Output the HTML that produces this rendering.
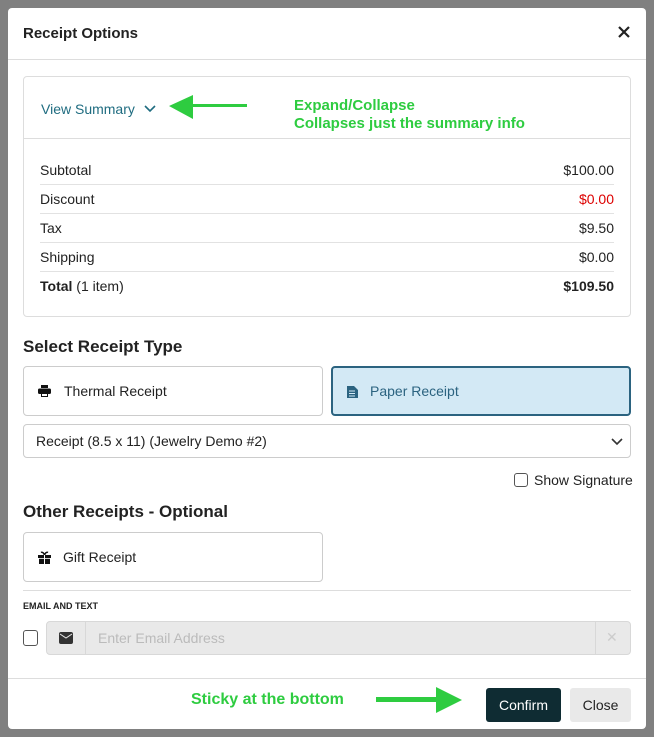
<!DOCTYPE html>
<html><head><style>
*{box-sizing:border-box;margin:0;padding:0}
body{width:654px;height:737px;background:#808080;font-family:"Liberation Sans",sans-serif;position:relative;overflow:hidden;color:#222}
.modal{position:absolute;left:8px;top:8px;width:638px;height:721px;background:#fff;border-radius:4px}
.abs{position:absolute}
.hdr{left:0;top:0;width:638px;height:52px;border-bottom:1px solid #ddd}
.card{left:15px;top:68px;width:608px;height:241px;border:1px solid #ddd;border-radius:4px}
.row{position:absolute;left:16px;right:16px;height:29px;font-size:14px;line-height:29px;display:flex;justify-content:space-between}
.row.b{border-bottom:1px solid #e2e2e2}
.btn{border:1px solid #ccc;border-radius:4px;font-size:14px;display:flex;align-items:center;padding-left:14px}
.g{color:#2ecc40;font-weight:bold;font-size:15px}
</style></head><body>
<div class="modal">
 <div class="abs hdr"><div class="abs" style="left:15px;top:17px;font-size:15px;font-weight:bold">Receipt Options</div>
 <svg class="abs" style="left:610px;top:18px" width="12" height="12"><path d="M1 1l10 10M11 1L1 11" stroke="#222" stroke-width="2.2"/></svg></div>
 <div class="abs card">
  <div class="abs" style="left:0;top:0;width:606px;height:62px;border-bottom:1px solid #ddd"></div>
  <div class="abs" style="left:17px;top:24px;font-size:14px;color:#1f6c80">View Summary</div>
  <svg class="abs" style="left:119px;top:27px" width="14" height="10"><path d="M2 2l5 5 5-5" stroke="#1f6c80" stroke-width="1.6" fill="none"/></svg>
  <svg class="abs" style="left:143px;top:16px" width="84" height="28"><path d="M2 13L26 2v9h54v3H26v12z" fill="#2ecc40"/></svg>
  <div class="abs g" style="left:270px;top:20px">Expand/Collapse</div>
  <div class="abs g" style="left:270px;top:38px">Collapses just the summary info</div>
  <div class="row b" style="top:79px"><span>Subtotal</span><span>$100.00</span></div>
  <div class="row b" style="top:108px"><span>Discount</span><span style="color:#d00">$0.00</span></div>
  <div class="row b" style="top:137px"><span>Tax</span><span>$9.50</span></div>
  <div class="row b" style="top:166px"><span>Shipping</span><span>$0.00</span></div>
  <div class="row" style="top:195px"><span><b>Total</b> (1 item)</span><b>$109.50</b></div>
 </div>
 <div class="abs" style="left:15px;top:329px;font-size:17px;font-weight:bold">Select Receipt Type</div>
 <div class="abs btn" style="left:15px;top:358px;width:300px;height:50px"><svg width="13" height="12" style="margin-right:13px"><path d="M3 0h7v3H3z" fill="#111"/><rect x="0" y="3.5" width="13" height="5.5" rx="1.5" fill="#111"/><path d="M3 8h7v4H3z" fill="#111"/><path d="M4 9h5v2H4z" fill="#fff"/></svg>Thermal Receipt</div>
 <div class="abs btn" style="left:323px;top:358px;width:300px;height:50px;background:#d3e9f5;border:2px solid #2b6380;color:#2b6380"><svg width="11" height="13" style="margin-right:12px"><path d="M0 1h7l4 4v8H0z" fill="#2b6380"/><path d="M2 6h6M2 8.5h6M2 11h6" stroke="#d3e9f5"/></svg>Paper Receipt</div>
 <div class="abs btn" style="left:15px;top:416px;width:608px;height:34px;padding-left:12px">Receipt (8.5 x 11) (Jewelry Demo #2)
  <svg class="abs" style="right:6px;top:12px" width="14" height="10"><path d="M2 2l5 5 5-5" stroke="#333" stroke-width="1.6" fill="none"/></svg></div>
 <div class="abs" style="left:506px;top:465px;width:14px;height:14px;border:1px solid #555;border-radius:3px"></div>
 <div class="abs" style="left:526px;top:464px;font-size:14px">Show Signature</div>
 <div class="abs" style="left:15px;top:494px;font-size:17px;font-weight:bold">Other Receipts - Optional</div>
 <div class="abs btn" style="left:15px;top:524px;width:300px;height:50px"><svg width="13" height="13" style="margin-right:12px"><path d="M3 1.5c1.5-1 3 1 3.5 2.5C7 2.5 8.5.5 10 1.5" stroke="#111" stroke-width="1.5" fill="none"/><rect x="0" y="4" width="13" height="3" fill="#111"/><rect x="1" y="7.8" width="11" height="5.2" fill="#111"/><path d="M6.5 4v9" stroke="#fff" stroke-width="1"/></svg>Gift Receipt</div>
 <div class="abs" style="left:15px;top:582px;width:608px;border-top:1px solid #ddd"></div>
 <div class="abs" style="left:15px;top:593px;font-size:9px;font-weight:bold">EMAIL AND TEXT</div>
 <div class="abs" style="left:15px;top:622px;width:15px;height:16px;border:1px solid #555;border-radius:3px"></div>
 <div class="abs" style="left:38px;top:613px;width:585px;height:34px;background:#e9e9e9;border:1px solid #d8d8d8;border-radius:4px">
  <div class="abs" style="left:38px;top:0;height:32px;border-left:1px solid #d8d8d8"></div>
  <svg class="abs" style="left:12px;top:10px" width="14" height="12"><rect width="14" height="12" rx="2" fill="#333"/><path d="M1 2l6 4 6-4" stroke="#e9e9e9" fill="none"/></svg>
  <div class="abs" style="left:51px;top:8px;font-size:14px;color:#bbb">Enter Email Address</div>
  <div class="abs" style="left:548px;top:0;height:32px;border-left:1px solid #d8d8d8"></div>
  <div class="abs" style="left:559px;top:7px;font-size:14px;color:#ccc">✕</div>
 </div>
 <div class="abs" style="left:0;top:670px;width:638px;border-top:1px solid #ddd"></div>
 <div class="abs g" style="left:183px;top:683px;font-size:16px">Sticky at the bottom</div>
 <svg class="abs" style="left:368px;top:678px" width="88" height="28"><path d="M0 11h60V1l26 13-26 13V16H0z" fill="#2ecc40"/></svg>
 <div class="abs" style="left:478px;top:680px;width:75px;height:34px;background:#0f2c33;border-radius:3px;color:#fff;font-size:14px;text-align:center;line-height:34px">Confirm</div>
 <div class="abs" style="left:562px;top:680px;width:61px;height:34px;background:#e9e9e9;border-radius:3px;font-size:14px;text-align:center;line-height:34px">Close</div>
</div>
</body></html>
